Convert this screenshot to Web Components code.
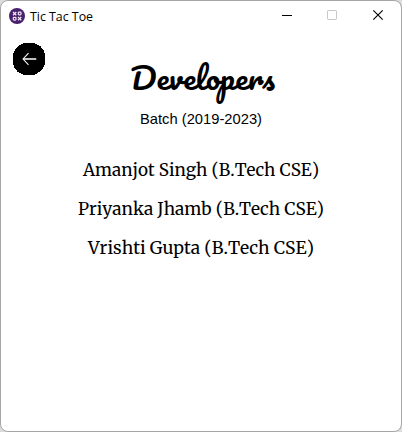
<!DOCTYPE html>
<html lang="en">
<head>
<meta charset="utf-8">
<title>Tic Tac Toe</title>
<style>
html,body{margin:0;width:402px;height:432px;overflow:hidden;background:#dcdcdc}
</style>
</head>
<body>
<app-window>
  <title-bar slot="bar"></title-bar>
  <back-button></back-button>
  <page-heading></page-heading>
  <developer-list></developer-list>
</app-window>
<script>
const define = (name, html, setup) => customElements.define(name, class extends HTMLElement {
  constructor() {
    super();
    const t = document.createElement('template');
    t.innerHTML = html;
    this.attachShadow({mode: 'open'}).append(t.content.cloneNode(true));
  }
  connectedCallback() { if (setup) setup(this); }
});

// One line of text, fitted to a given width.
define('fit-text', `<style>:host{display:block;line-height:0}svg{display:block;overflow:visible}</style>
<svg><text x="0" lengthAdjust="spacingAndGlyphs"></text></svg>`, el => {
  const svg = el.shadowRoot.querySelector('svg'), t = svg.firstElementChild;
  const a = n => el.getAttribute(n);
  svg.setAttribute('width', a('width'));
  svg.setAttribute('height', a('height'));
  t.setAttribute('y', a('baseline'));
  t.setAttribute('textLength', a('width'));
  t.textContent = a('text');
});

define('app-window', `<style>
:host{display:flex;flex-direction:column;box-sizing:border-box;width:402px;height:432px;border:1px solid #a6a6a6;border-radius:8px;background:#fff;color:#000;overflow:hidden}
main{flex:1;display:flex;flex-direction:column}
</style><slot name="bar"></slot><main><slot></slot></main>`);

define('title-bar', `<style>
:host{display:flex;align-items:center;height:29px;padding-left:8px;font:12.8px "Segoe UI","Open Sans",sans-serif}
.name{margin-left:5px;flex:1}
.controls{display:flex}
svg{display:block;flex:none}
</style>
<svg width="16" height="16" viewBox="0 0 16 16"><circle cx="8" cy="8" r="8" fill="#48206c"/>
<g fill="none" stroke="#eee5f4" stroke-width="1.25"><path d="M4 4l3.3 3.3M7.3 4L4 7.3M9 9l3.3 3.3M12.3 9L9 12.3"/><rect x="9.3" y="4.2" width="2.7" height="2.7" rx=".8"/><rect x="4.3" y="9.3" width="2.7" height="2.7" rx=".8"/></g></svg>
<fit-text class="name" text="Tic Tac Toe" width="63" height="17" baseline="14"></fit-text>
<div class="controls">
<svg width="45" height="29"><path d="M11 14.5h10" stroke="#000"/></svg>
<svg width="46" height="29"><rect x="11.5" y="9.5" width="9" height="9" rx=".7" fill="none" stroke="#c8c8c8"/></svg>
<svg width="39" height="29"><path d="M11.3 9.3l9.4 9.4M20.7 9.3l-9.4 9.4" stroke="#000" stroke-width="1.15"/></svg>
</div>`);

define('back-button', `<style>:host{display:block;height:33px;padding:13px 0 0 12px}svg{display:block}</style>
<svg width="32" height="32" viewBox="0 0 33 33" shape-rendering="crispEdges"><path d="M11 0h11l6 3 4 5 1 4v9l-2 5-4 4-5 3H11l-6-3-4-5-1-4v-9l2-5 4-4z"/><g shape-rendering="auto" stroke="#fff" fill="none"><path d="M11 16.5h13" stroke-width="1.7"/><path d="M16 10.5l-5.6 6 5.6 6" stroke-width="1.1"/></g></svg>`);

define('page-heading', `<style>
:host{display:flex;flex-direction:column;align-items:center;margin-top:-17px}
.title{font:400 30px Pacifico,cursive;margin-left:2px}
.batch{font:15px Arial,"Liberation Sans",sans-serif;margin-top:3px}
</style>
<fit-text class="title" text="Developers" width="145" height="48" baseline="31"></fit-text>
<fit-text class="batch" text="Batch (2019-2023)" width="122" height="18" baseline="14"></fit-text>`);

define('developer-list', `<style>
:host{display:flex;flex-direction:column;align-items:center;gap:15px;margin-top:29px;font:17.8px Merriweather,serif;font-kerning:none}
fit-text{margin-right:1px}
</style>
<fit-text text="Amanjot Singh (B.Tech CSE)" width="236" height="24" baseline="19"></fit-text>
<fit-text text="Priyanka Jhamb (B.Tech CSE)" width="246" height="24" baseline="19"></fit-text>
<fit-text text="Vrishti Gupta (B.Tech CSE)" width="226" height="24" baseline="19"></fit-text>`);
</script>
</body>
</html>
